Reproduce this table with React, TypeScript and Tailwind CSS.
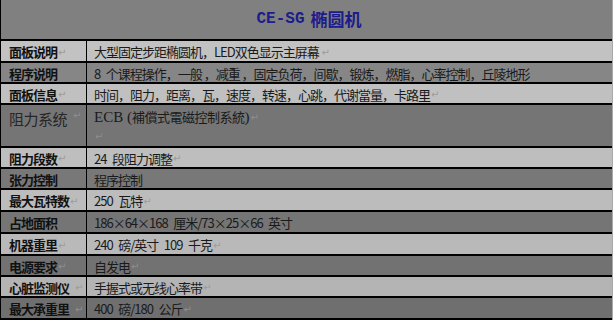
import React from "react";

type Row = {
  label: string;
  labelMark?: string;
  value: string;
  valueMark?: boolean;
  h: string;
  bg: string;
  light: boolean;
};

const Mark = ({ light, pad }: { light: boolean; pad?: boolean }) => (
  <span
    className={`${pad ? "ml-[6px]" : "ml-[1px]"} text-[10px] tracking-normal ${light ? "text-[#9c9c9c]" : "text-[#8e8e8e]"}`}
    style={{ fontFamily: '"DejaVu Sans", sans-serif' }}
  >
    ↵
  </span>
);

const sp = (s: string) => s.replace(/(\d) /g, "$1\u2002").replace(/ ([\d])/g, "\u2002$1");

export default function App() {
  const rows: Row[] = [
    { label: "面板说明", labelMark: "", value: "大型固定步距椭圆机，LED双色显示主屏幕 ", valueMark: true, h: "h-[22px]", bg: "bg-[#c2c2c2]", light: true },
    { label: "程序说明", value: "8 个课程操作，一般 ，减重 ，固定负荷，间歇，锻炼，燃脂，心率控制，丘陵地形", h: "h-[21px]", bg: "bg-[#868686]", light: false },
    { label: "面板信息", labelMark: "", value: "时间，阻力，距离，瓦，速度，转速，心跳，代谢當量，卡路里", valueMark: true, h: "h-[21px]", bg: "bg-[#c0c0c0]", light: true },
  ];
  const rows2: Row[] = [
    { label: "阻力段数", labelMark: "", value: "24 段阻力调整", valueMark: true, h: "h-[21px]", bg: "bg-[#bebebe]", light: true },
    { label: "张力控制", value: "程序控制", h: "h-[21px]", bg: "bg-[#787878]", light: false },
    { label: "最大瓦特数", labelMark: "", value: "250 瓦特", valueMark: true, h: "h-[22px]", bg: "bg-[#bcbcbc]", light: true },
    { label: "占地面积", value: "186×64×168 厘米/73×25×66 英寸", h: "h-[22px]", bg: "bg-[#757575]", light: false },
    { label: "机器重里", labelMark: "", value: "240 磅/英寸 109 千克", valueMark: true, h: "h-[22px]", bg: "bg-[#b9b9b9]", light: true },
    { label: "电源要求", labelMark: "", value: "自发电", valueMark: true, h: "h-[21px]", bg: "bg-[#727272]", light: false },
    { label: "心脏监测仪", labelMark: " ", value: "手握式或无线心率带", valueMark: true, h: "h-[21px]", bg: "bg-[#b4b4b4]", light: true },
    { label: "最大承重里", labelMark: " ", value: "400 磅/180 公斤", valueMark: true, h: "h-[22px]", bg: "bg-[#6f6f6f]", light: false },
  ];

  const renderRow = (r: Row, i: number) => (
    <div key={i} className={`flex ${r.h} ${r.bg} border-b-2 border-black`}>
      <div className="w-[86px] shrink-0 border-r border-black flex items-center pl-[8px] pt-[2px]">
        <span className="text-[13px] font-bold tracking-[-1px] text-[#111] whitespace-nowrap">{r.label}</span>
        {r.labelMark !== undefined && <Mark light={r.light} pad={r.labelMark === " "} />}
      </div>
      <div className="flex-1 flex items-center pl-[7px] pt-[2px]">
        <span className="text-[13px] tracking-[-1px] text-[#1a1a1a] whitespace-pre">{sp(r.value)}</span>
        {r.valueMark && <Mark light={r.light} />}
      </div>
    </div>
  );

  return (
    <div
      className="w-[613px] h-[320px] overflow-hidden bg-[#808080] border-l border-black border-r border-r-[#a8a8a8] flex flex-col"
      style={{ fontFamily: '"Noto Sans CJK SC", sans-serif' }}
    >
      <div className="h-[41px] bg-[#808080] border-b-2 border-black flex items-center justify-center pl-[5px] pb-[1px]">
        <span className="text-[#1c1c8c] font-bold text-[16px]" style={{ fontFamily: '"Liberation Mono", monospace' }}>
          CE-SG
        </span>
        <span className="ml-[6px] text-[#1c1c8c] font-bold text-[17px]">椭圆机</span>
      </div>
      {rows.map(renderRow)}
      <div className="flex h-[43px] bg-[#757575] border-b-2 border-black">
        <div className="w-[86px] shrink-0 border-r border-black flex items-start pl-[8px] pt-[3px]">
          <span className="text-[15px] text-[#262626] tracking-[-0.5px]">阻力系统</span>
          <Mark light={false} pad />
        </div>
        <div className="flex-1 flex flex-col pl-[7px] pt-[2px]">
          <div className="flex items-center h-[20px]">
            <span className="text-[15px] text-[#1a1a1a]" style={{ fontFamily: '"Liberation Serif", serif' }}>ECB (</span>
            <span className="text-[13px] tracking-[-0.5px] text-[#1a1a1a]">補償式電磁控制系統</span>
            <span className="text-[15px] text-[#1a1a1a]" style={{ fontFamily: '"Liberation Serif", serif' }}>)</span>
            <Mark light={false} />
          </div>
          <div className="flex items-center h-[18px]">
            <Mark light={false} />
          </div>
        </div>
      </div>
      {rows2.map(renderRow)}
    </div>
  );
}
